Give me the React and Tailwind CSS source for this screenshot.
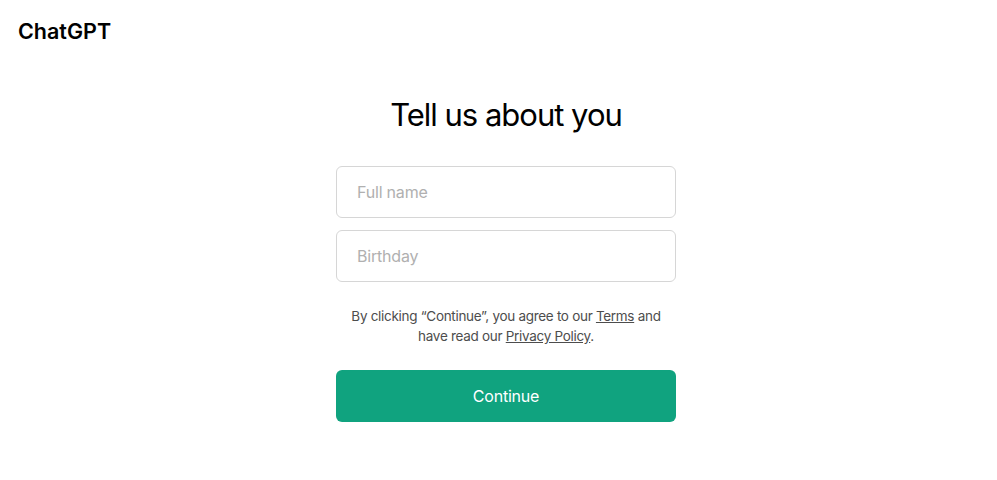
import React, { useState } from 'react';

const App = () => {
  const [name, setName] = useState('');
  const [birthday, setBirthday] = useState('');

  return (
    <div className="min-h-screen bg-white text-black" style={{ fontFamily: 'Inter, "Noto Sans", sans-serif' }}>
      <header className="px-[18px] pt-[16px]">
        <div className="text-[21.5px] leading-[30px] font-semibold tracking-[0px]">ChatGPT</div>
      </header>

      <main className="flex flex-col items-center pl-[15px]">
        <h1 className="mt-[49px] text-[31px] leading-[40px] font-normal tracking-[-1px]">Tell us about you</h1>

        <form className="mt-[31px] w-[340px] flex flex-col" onSubmit={(e) => e.preventDefault()}>
          <input
            type="text"
            value={name}
            onChange={(e) => setName(e.target.value)}
            placeholder="Full name"
            className="h-[52px] w-full rounded-[6px] border border-[#d6d6d6] px-[20px] text-[16px] tracking-[-0.2px] text-[#2d333a] placeholder:text-[#b0b0b0] focus:outline-none"
          />
          <input
            type="text"
            value={birthday}
            onChange={(e) => setBirthday(e.target.value)}
            placeholder="Birthday"
            className="mt-[12px] h-[52px] w-full rounded-[6px] border border-[#d6d6d6] px-[20px] text-[16px] tracking-[-0.2px] text-[#2d333a] placeholder:text-[#b0b0b0] focus:outline-none"
          />

          <p className="mt-[24px] text-center text-[13.5px] leading-[20px] tracking-[-0.3px] text-[#4d4d4d]">
            By clicking “Continue”, you agree to our <a href="#" className="underline">Terms</a> and
            <br />
            have read our <a href="#" className="underline">Privacy Policy</a>.
          </p>

          <button
            type="submit"
            className="mt-[24px] h-[52px] w-full rounded-[6px] bg-[#10a37f] text-[16px] tracking-[-0.2px] text-white"
          >
            Continue
          </button>
        </form>
      </main>
    </div>
  );
};

export default App;
